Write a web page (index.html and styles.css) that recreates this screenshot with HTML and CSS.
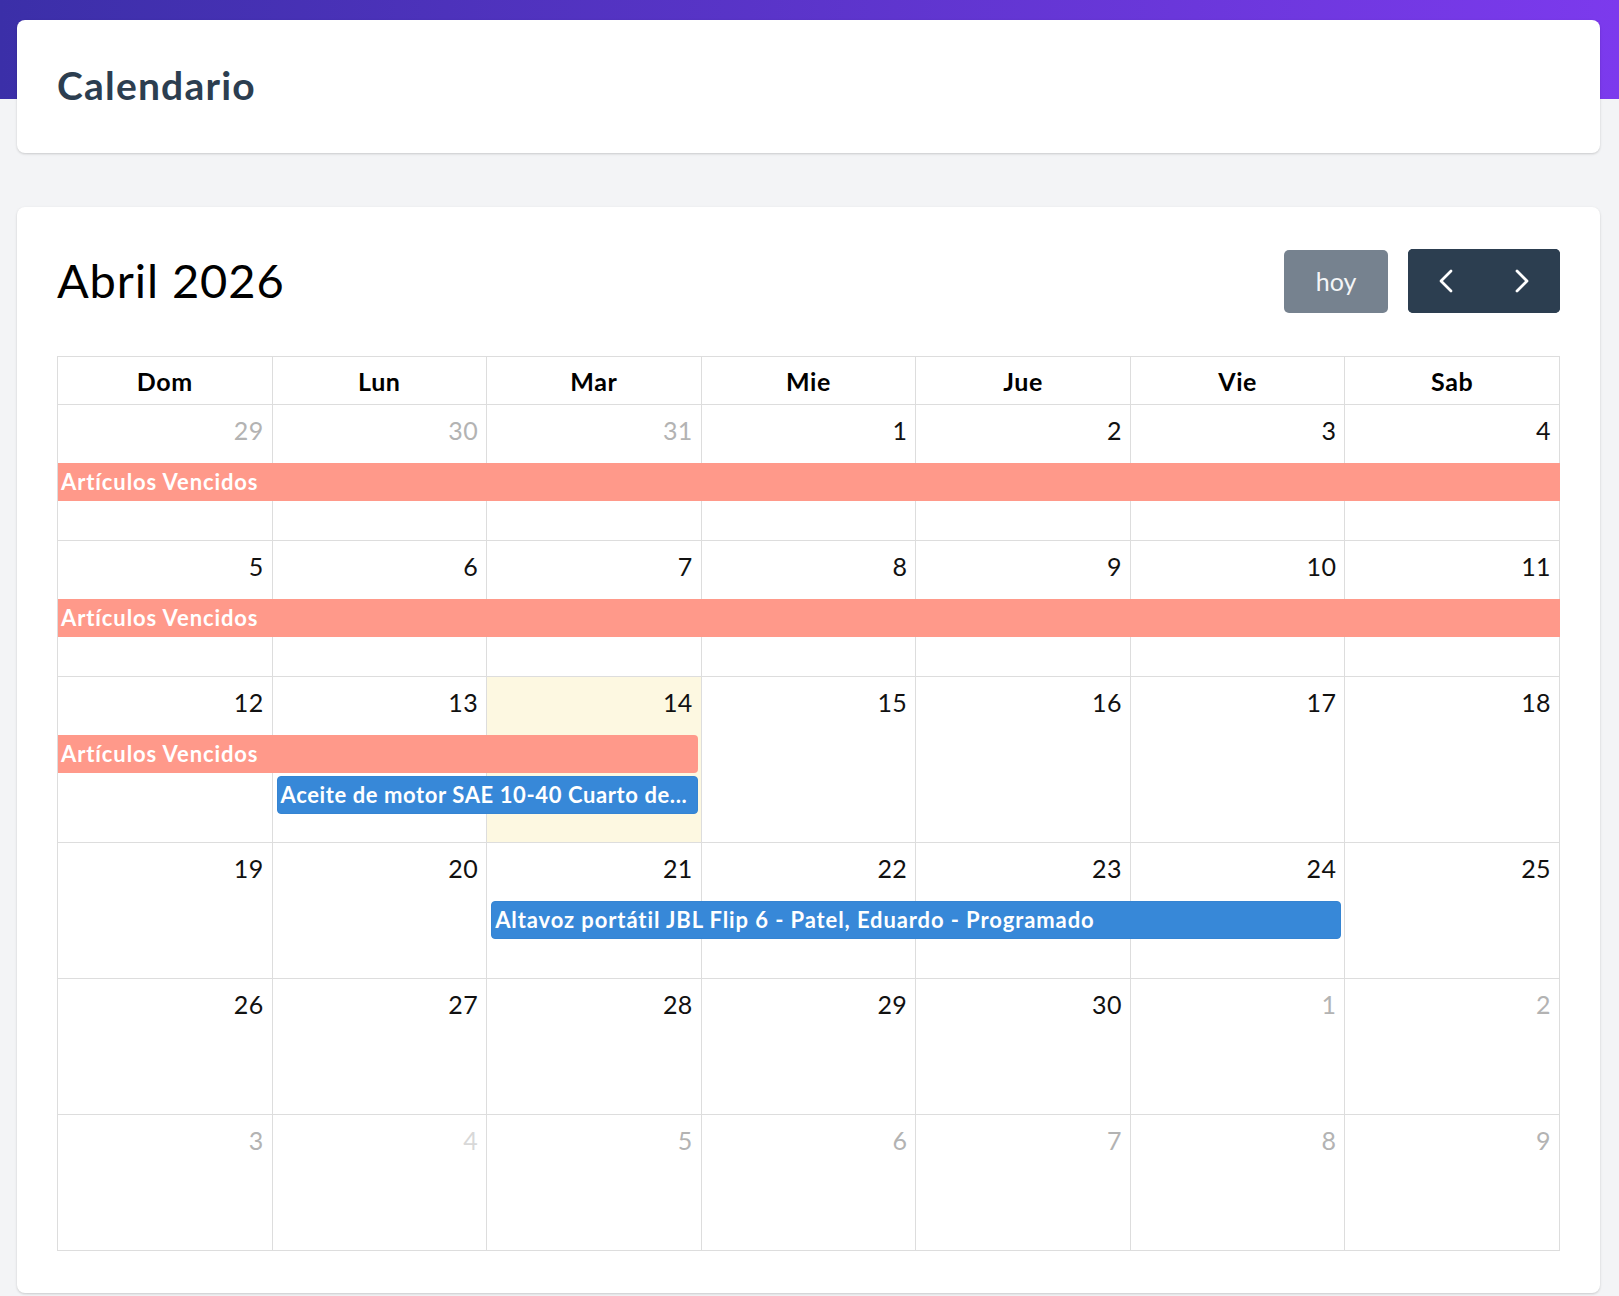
FILE: index.html
```html
<!DOCTYPE html>
<html lang="es">
<head>
    <meta charset="UTF-8">
    <meta name="viewport" content="width=device-width, initial-scale=1.0">
    <title>Calendario</title>
    <link rel="stylesheet" href="styles.css">
</head>
<body>
    <div class="page">
        <div class="card header-card">
            <h1 class="page-title">Calendario</h1>
        </div>

        <div class="card calendar-card">
            <div class="toolbar">
                <h2 class="month-title">Abril 2026</h2>
                <div class="actions">
                    <button class="btn btn-today">hoy</button>
                    <div class="btn-group">
                        <button class="btn btn-nav" aria-label="anterior">
                            <svg width="16" height="24" viewBox="0 0 16 24"><polyline points="13,2 3,12 13,22" fill="none" stroke="#fff" stroke-width="2.8" stroke-linecap="round" stroke-linejoin="round"/></svg>
                        </button>
                        <button class="btn btn-nav" aria-label="siguiente">
                            <svg width="16" height="24" viewBox="0 0 16 24"><polyline points="3,2 13,12 3,22" fill="none" stroke="#fff" stroke-width="2.8" stroke-linecap="round" stroke-linejoin="round"/></svg>
                        </button>
                    </div>
                </div>
            </div>

            <div class="month">
                <div class="dow-row">
                    <div class="dow">Dom</div>
                    <div class="dow">Lun</div>
                    <div class="dow">Mar</div>
                    <div class="dow">Mie</div>
                    <div class="dow">Jue</div>
                    <div class="dow">Vie</div>
                    <div class="dow">Sab</div>
                </div>

                <div class="week">
                    <div class="cell"><span class="num other">29</span></div>
                    <div class="cell"><span class="num other">30</span></div>
                    <div class="cell"><span class="num other">31</span></div>
                    <div class="cell"><span class="num">1</span></div>
                    <div class="cell"><span class="num">2</span></div>
                    <div class="cell"><span class="num">3</span></div>
                    <div class="cell"><span class="num">4</span></div>
                    <div class="event ev-salmon cols-1-8 row-a">Artículos Vencidos</div>
                </div>

                <div class="week">
                    <div class="cell"><span class="num">5</span></div>
                    <div class="cell"><span class="num">6</span></div>
                    <div class="cell"><span class="num">7</span></div>
                    <div class="cell"><span class="num">8</span></div>
                    <div class="cell"><span class="num">9</span></div>
                    <div class="cell"><span class="num">10</span></div>
                    <div class="cell"><span class="num">11</span></div>
                    <div class="event ev-salmon cols-1-8 row-a">Artículos Vencidos</div>
                </div>

                <div class="week">
                    <div class="cell"><span class="num">12</span></div>
                    <div class="cell"><span class="num">13</span></div>
                    <div class="cell today"><span class="num">14</span></div>
                    <div class="cell"><span class="num">15</span></div>
                    <div class="cell"><span class="num">16</span></div>
                    <div class="cell"><span class="num">17</span></div>
                    <div class="cell"><span class="num">18</span></div>
                    <div class="event ev-salmon cols-1-4 row-a end">Artículos Vencidos</div>
                    <div class="event ev-blue ev-tight cols-2-4 row-b start end">Aceite de motor SAE 10-40 Cuarto de...</div>
                </div>

                <div class="week">
                    <div class="cell"><span class="num">19</span></div>
                    <div class="cell"><span class="num">20</span></div>
                    <div class="cell"><span class="num">21</span></div>
                    <div class="cell"><span class="num">22</span></div>
                    <div class="cell"><span class="num">23</span></div>
                    <div class="cell"><span class="num">24</span></div>
                    <div class="cell"><span class="num">25</span></div>
                    <div class="event ev-blue cols-3-7 row-a start end">Altavoz portátil JBL Flip 6 - Patel, Eduardo - Programado</div>
                </div>

                <div class="week">
                    <div class="cell"><span class="num">26</span></div>
                    <div class="cell"><span class="num">27</span></div>
                    <div class="cell"><span class="num">28</span></div>
                    <div class="cell"><span class="num">29</span></div>
                    <div class="cell"><span class="num">30</span></div>
                    <div class="cell"><span class="num other">1</span></div>
                    <div class="cell"><span class="num other">2</span></div>
                </div>

                <div class="week">
                    <div class="cell"><span class="num other">3</span></div>
                    <div class="cell"><span class="num other faded">4</span></div>
                    <div class="cell"><span class="num other">5</span></div>
                    <div class="cell"><span class="num other">6</span></div>
                    <div class="cell"><span class="num other">7</span></div>
                    <div class="cell"><span class="num other">8</span></div>
                    <div class="cell"><span class="num other">9</span></div>
                </div>
            </div>
        </div>
    </div>
</body>
</html>
```

FILE: styles.css
```css
body{
    margin: 0;
    padding: 0;
    font-family: "Lato", "Open Sans", sans-serif;
    background-color: #f3f4f6;
}
.page{
    background: linear-gradient(90deg, #3b2fa8, #7c3aed) top left / 100% 99px no-repeat;
    padding: 20px 19px 4px 17px;
}
.card{
    background-color: #fff;
    border-radius: 8px;
    box-shadow: 0 1px 3px rgba(0, 0, 0, 0.12), 0 1px 2px rgba(0, 0, 0, 0.06);
}
.header-card{
    height: 133px;
    display: flex;
    align-items: center;
    padding: 0 40px;
}
.page-title{
    margin: 0 0 3px 0;
    font-size: 39px;
    font-weight: 700;
    letter-spacing: 1.2px;
    color: #2c3e50;
}
.calendar-card{
    margin-top: 54px;
    padding: 42px 40px 42px 40px;
}

/* toolbar */
.toolbar{
    display: flex;
    justify-content: space-between;
    align-items: center;
    height: 64px;
    margin-bottom: 43px;
}
.month-title{
    margin: 0 0 3px 0;
    font-size: 47px;
    font-weight: 400;
    letter-spacing: 0.9px;
    color: #000;
}
.actions{
    display: flex;
    align-items: center;
    gap: 20px;
}
.btn{
    border: 0;
    font-family: inherit;
    color: #fff;
    cursor: pointer;
}
.btn-today{
    width: 104px;
    height: 63px;
    background-color: #76828f;
    border-radius: 5px;
    font-size: 25px;
    color: #f4f5f7;
}
.btn-group{
    display: flex;
    background-color: #2c3e50;
    border-radius: 5px;
    overflow: hidden;
}
.btn-nav{
    width: 76px;
    height: 64px;
    background-color: #2c3e50;
    display: flex;
    align-items: center;
    justify-content: center;
}

/* month grid */
.month{
    border-left: 1px solid #ddd;
    border-top: 1px solid #ddd;
}
.dow-row{
    display: grid;
    grid-template-columns: repeat(7, 1fr);
}
.dow{
    height: 47px;
    display: flex;
    align-items: center;
    justify-content: center;
    font-size: 25px;
    font-weight: 700;
    letter-spacing: 0.6px;
    color: #000;
    border-right: 1px solid #ddd;
    border-bottom: 1px solid #ddd;
}
.week{
    display: grid;
    grid-template-columns: repeat(7, 1fr);
    grid-template-rows: 58px auto auto minmax(26px, 1fr);
    min-height: 136px;
}
.cell{
    grid-row: 1 / -1;
    display: flex;
    justify-content: flex-end;
    align-items: flex-start;
    border-right: 1px solid #ddd;
    border-bottom: 1px solid #ddd;
}
.week .cell:nth-child(1){ grid-column: 1; }
.week .cell:nth-child(2){ grid-column: 2; }
.week .cell:nth-child(3){ grid-column: 3; }
.week .cell:nth-child(4){ grid-column: 4; }
.week .cell:nth-child(5){ grid-column: 5; }
.week .cell:nth-child(6){ grid-column: 6; }
.week .cell:nth-child(7){ grid-column: 7; }
.today{
    background-color: #fdf8e1;
}
.num{
    padding: 9px 8px 0 0;
    font-size: 25px;
    line-height: 32px;
    letter-spacing: 0.4px;
    color: #111;
}
.other{
    color: #b3b3b3;
}
.faded{
    color: #d8d8d8;
}

/* events */
.event{
    height: 38px;
    line-height: 38px;
    margin-bottom: 3px;
    padding: 0 3px;
    font-size: 22px;
    font-weight: 700;
    letter-spacing: 0.9px;
    color: #fff;
    white-space: nowrap;
    overflow: hidden;
    z-index: 1;
}
.ev-salmon{
    background-color: #ff998a;
}
.ev-blue{
    background-color: #3788d8;
    border: 1px solid #3584d2;
    height: 36px;
    line-height: 36px;
}
.ev-tight{
    padding-right: 0;
    letter-spacing: 0.6px;
}
.row-a{ grid-row: 2; }
.row-b{ grid-row: 3; }
.cols-1-8{ grid-column: 1 / 8; }
.cols-1-4{ grid-column: 1 / 4; }
.cols-2-4{ grid-column: 2 / 4; }
.cols-3-7{ grid-column: 3 / 7; }
.start{
    margin-left: 4px;
    border-top-left-radius: 4px;
    border-bottom-left-radius: 4px;
}
.end{
    margin-right: 4px;
    border-top-right-radius: 4px;
    border-bottom-right-radius: 4px;
}
```
